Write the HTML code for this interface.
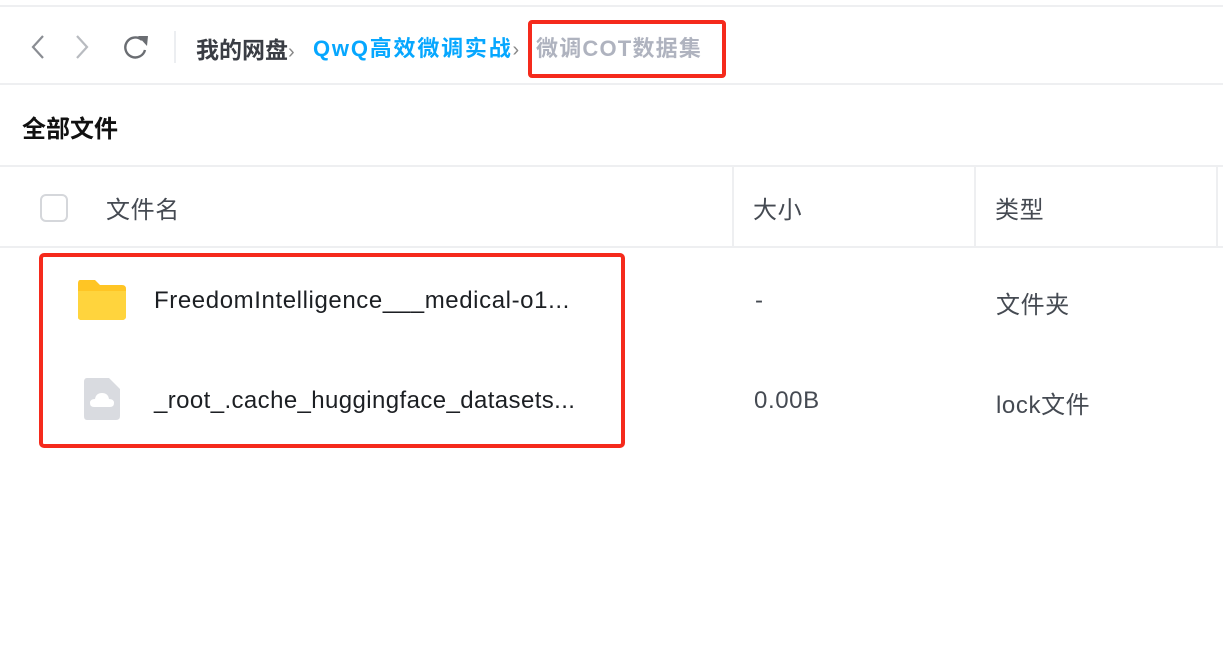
<!DOCTYPE html>
<html><head><meta charset="utf-8"><style>
*{margin:0;padding:0;box-sizing:border-box}
body{width:1223px;height:669px;background:#fff;position:relative;overflow:hidden;font-family:"Liberation Sans","Noto Sans CJK SC",sans-serif;}
.a{position:absolute;white-space:nowrap}
.line{position:absolute;left:0;width:1223px;height:2px;background:#eeeff1}
.r{font-size:24px;letter-spacing:0.6px}
</style></head><body>
<div class="line" style="top:5px"></div>
<svg class="a" style="left:28px;top:34px" width="20" height="26"><path d="M15 2 L5 13 L15 24" stroke="#8a8d93" stroke-width="2.2" fill="none"/></svg>
<svg class="a" style="left:72px;top:34px" width="20" height="26"><path d="M5 2 L15 13 L5 24" stroke="#b8bbc0" stroke-width="2.2" fill="none"/></svg>
<svg class="a" style="left:122px;top:33px" width="30" height="28"><path d="M20 7 A10 10 0 1 0 23 17" stroke="#6a6d72" stroke-width="2.4" fill="none"/><path d="M16 3 L26 3 L25 13 Z" fill="#6a6d72"/></svg>
<div class="a" style="left:174px;top:31px;width:2px;height:32px;background:#eceef1"></div>
<div class="a" style="left:196px;top:31px;font-size:23px;font-weight:bold;color:#3a3d44">我的网盘<span style="font-weight:normal;color:#888;font-size:20px">›</span></div>
<div class="a" style="left:313px;top:31px;font-size:22px;font-weight:bold;color:#06a7ff;letter-spacing:1.8px">QwQ高效微调实战<span style="font-weight:normal;color:#888;font-size:20px;letter-spacing:0">›</span></div>
<div class="a" style="left:536px;top:31px;font-size:22px;font-weight:bold;color:#afb3bf;letter-spacing:1.2px">微调COT数据集</div>
<div class="a" style="left:528px;top:20px;width:198px;height:58px;border:4px solid #f52a1c;border-radius:4px"></div>
<div class="line" style="top:83px"></div>
<div class="a" style="left:22px;top:109px;font-size:24px;font-weight:bold;color:#111">全部文件</div>
<div class="line" style="top:165px"></div>
<div class="a" style="left:40px;top:194px;width:28px;height:28px;border:2px solid #d5d7db;border-radius:6px"></div>
<div class="a r" style="left:106px;top:190px;color:#454a52">文件名</div>
<div class="a" style="left:732px;top:167px;width:2px;height:80px;background:#eeeff1"></div>
<div class="a r" style="left:753px;top:190px;color:#454a52">大小</div>
<div class="a" style="left:974px;top:167px;width:2px;height:80px;background:#eeeff1"></div>
<div class="a r" style="left:995px;top:190px;color:#454a52">类型</div>
<div class="a" style="left:1216px;top:167px;width:2px;height:80px;background:#eeeff1"></div>
<div class="line" style="top:246px"></div>
<svg class="a" style="left:76px;top:277px" width="52" height="44"><path d="M4 3 Q2 3 2 7 L2 40 Q2 43 6 43 L46 43 Q50 43 50 39 L50 12 Q50 8 46 8 L24 8 L19 3 Z" fill="#ffc524"/><path d="M2 14 L50 14 L50 39 Q50 43 46 43 L6 43 Q2 43 2 40 Z" fill="#ffd43d"/></svg>
<div class="a r" style="left:154px;top:287px;color:#1c1f23">FreedomIntelligence___medical-o1...</div>
<div class="a r" style="left:755px;top:287px;color:#454a52">-</div>
<div class="a r" style="left:996px;top:285px;color:#454a52">文件夹</div>
<svg class="a" style="left:82px;top:377px" width="40" height="44"><path d="M5 1 L27 1 L38 12 L38 39 Q38 43 34 43 L5 43 Q2 43 2 39 L2 5 Q2 1 5 1Z" fill="#d9dbe0"/><path d="M12 30 Q8 30 8 26 Q8 22 13 22 Q14 16 20 16 Q26 16 27 22 Q32 22 32 26 Q32 30 28 30Z" fill="#fff"/></svg>
<div class="a r" style="left:154px;top:387px;color:#1c1f23;letter-spacing:0.4px">_root_.cache_huggingface_datasets...</div>
<div class="a r" style="left:754px;top:387px;color:#454a52">0.00B</div>
<div class="a r" style="left:996px;top:385px;color:#454a52">lock文件</div>
<div class="a" style="left:39px;top:253px;width:586px;height:195px;border:4px solid #f52a1c;border-radius:5px"></div>
</body></html>
